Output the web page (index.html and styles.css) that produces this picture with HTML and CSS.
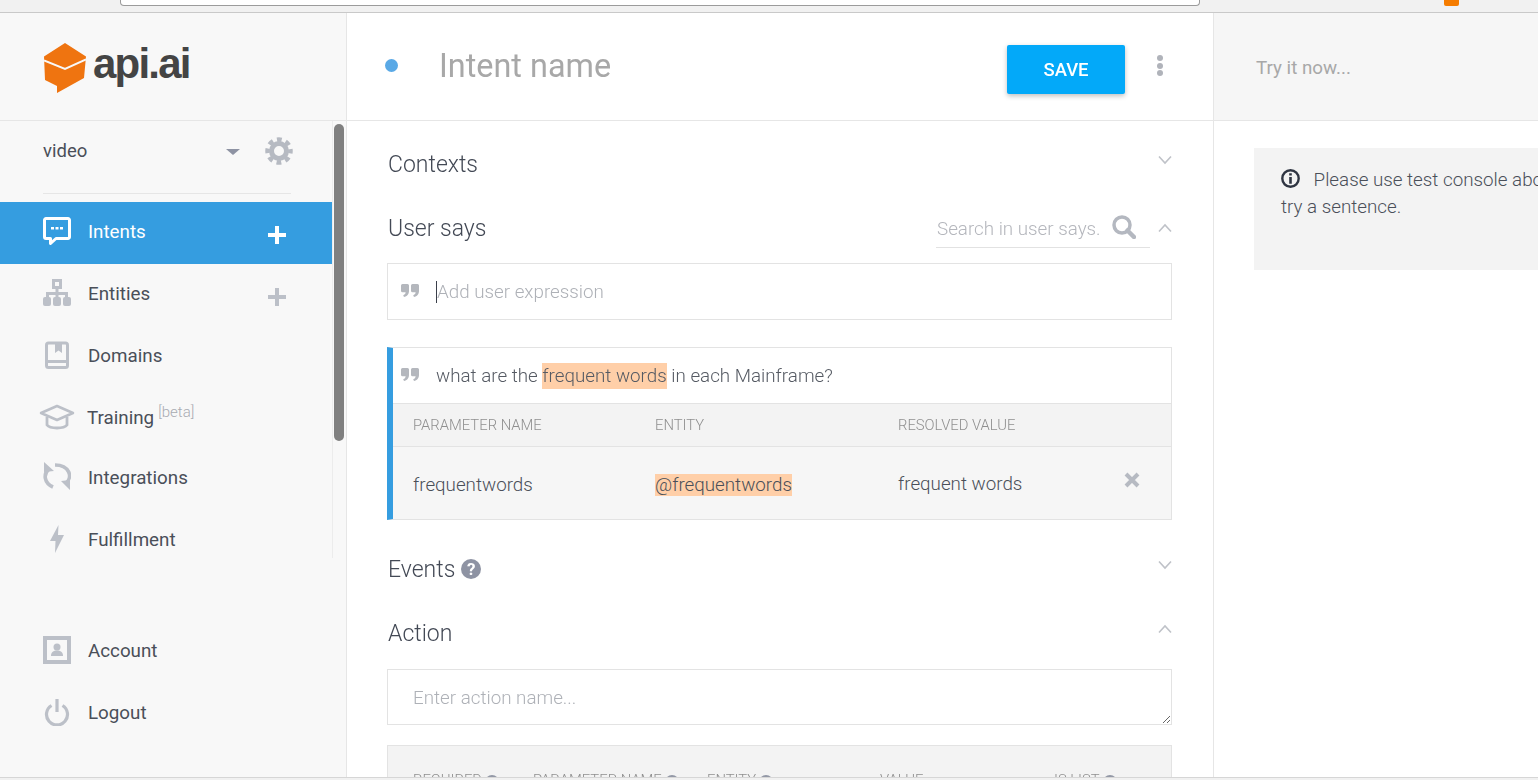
FILE: index.html
```html
<!DOCTYPE html>
<html lang="en">
<head>
    <meta charset="UTF-8">
    <title>api.ai - Intent</title>
    <link rel="stylesheet" href="styles.css">
</head>
<body>
    <svg class="defs" width="0" height="0">
        <symbol id="quote" viewBox="0 0 18 13">
            <path d="M1.500 0h5A1.500 1.500 0 0 1 8 1.500V7c0 3-2 5.500-5 6l-.8-1.800c1.500-.5 2.300-1.500 2.400-3H1.500A1.500 1.500 0 0 1 0 6.700V1.500A1.500 1.500 0 0 1 1.500 0z"/>
            <path d="M11.500 0h5A1.500 1.500 0 0 1 18 1.500V7c0 3-2 5.500-5 6l-.8-1.800c1.500-.5 2.300-1.500 2.400-3h-3.100A1.500 1.500 0 0 1 10 6.700V1.500A1.500 1.500 0 0 1 11.500 0z"/>
        </symbol>
        <symbol id="chev-down" viewBox="0 0 14 10">
            <path d="M1 1.500l6 6.500 6-6.500" fill="none" stroke="currentColor" stroke-width="1.600"/>
        </symbol>
        <symbol id="chev-up" viewBox="0 0 14 10">
            <path d="M1 8.500l6-6.500 6 6.500" fill="none" stroke="currentColor" stroke-width="1.600"/>
        </symbol>
        <symbol id="plus" viewBox="0 0 20 20">
            <path d="M10 1v18M1 10h18" fill="none" stroke="currentColor" stroke-width="4"/>
        </symbol>
    </svg>

    <div class="browser-bar">
        <div class="address-box"></div>
        <div class="ext-badge"></div>
    </div>

    <div class="app">
        <aside class="sidebar">
            <div class="logo-row">
                <svg class="logo-cube" width="42" height="50" viewBox="0 0 42 50">
                    <path d="M21 0L42 13.500 40 35 13 50V43L1 37 0 13.500z" fill="#ef7410"/>
                    <path d="M0 17.500L21 26 42 16.500" fill="none" stroke="#f8f8f8" stroke-width="2"/>
                </svg>
                <span class="logo-text">api.ai</span>
            </div>
            <div class="nav-scroll">
                <div class="agent-row">
                    <span class="agent-name">video</span>
                    <span class="agent-caret"></span>
                    <svg class="gear" width="28" height="28" viewBox="0 0 28 28">
                        <circle cx="14" cy="14" r="7.500" fill="none" stroke="#b6bac2" stroke-width="5"/>
                        <circle cx="14" cy="14" r="11.500" fill="none" stroke="#b6bac2" stroke-width="4.500" stroke-dasharray="4.800 4.230" stroke-dashoffset="2.400"/>
                    </svg>
                </div>
                <div class="nav-item active">
                    <span class="nav-icon">
                        <svg width="28" height="28" viewBox="0 0 28 28">
                            <path d="M3 1.500h22a1.500 1.500 0 0 1 1.500 1.500v17a1.500 1.500 0 0 1-1.500 1.500H13l-5.500 5v-5H3A1.500 1.500 0 0 1 1.500 20V3A1.500 1.500 0 0 1 3 1.500z" fill="none" stroke="#fff" stroke-width="3" stroke-linejoin="round"/>
                            <path d="M8 10h3v2.500H8zM12.500 10h3v2.500h-3zM17 10h3v2.500h-3z" fill="#fff"/>
                        </svg>
                    </span>
                    <span class="nav-label">Intents</span>
                    <svg class="nav-plus" width="20" height="20"><use href="#plus"/></svg>
                </div>
                <div class="nav-item">
                    <span class="nav-icon">
                        <svg width="28" height="28" viewBox="0 0 28 28">
                            <path d="M9 0h10v10H9zM12 3v4h4V3z" fill-rule="evenodd" fill="#bcc0c8"/>
                            <path d="M12.500 9h3v4H25v6h-3v-3h-6.500v3h-3v-3H6v3H3v-6h9.500z" fill="#bcc0c8"/>
                            <rect x="0" y="18" width="8" height="9" rx="2" fill="#bcc0c8"/>
                            <rect x="10" y="18" width="8" height="9" rx="2" fill="#bcc0c8"/>
                            <rect x="20" y="18" width="8" height="9" rx="2" fill="#bcc0c8"/>
                        </svg>
                    </span>
                    <span class="nav-label">Entities</span>
                    <svg class="nav-plus" width="20" height="20"><use href="#plus"/></svg>
                </div>
                <div class="nav-item">
                    <span class="nav-icon">
                        <svg width="28" height="28" viewBox="0 0 28 28">
                            <rect x="3.500" y="2" width="21" height="24.500" rx="2" fill="none" stroke="#bcc0c8" stroke-width="3"/>
                            <path d="M3.500 20.500h21" stroke="#bcc0c8" stroke-width="3"/>
                            <path d="M12 2h7v10l-3.500-2.500L12 12z" fill="#bcc0c8"/>
                        </svg>
                    </span>
                    <span class="nav-label">Domains</span>
                </div>
                <div class="nav-item training">
                    <span class="nav-icon">
                        <svg width="36" height="27" viewBox="0 0 36 27">
                            <path d="M18 2L34 9 18 16 2 9z" fill="none" stroke="#bcc0c8" stroke-width="2.500" stroke-linejoin="round"/>
                            <path d="M8 13v8c3 4 17 4 20 0v-8" fill="none" stroke="#bcc0c8" stroke-width="2.800"/>
                        </svg>
                    </span>
                    <span class="nav-label">Training<sup class="beta">[beta]</sup></span>
                </div>
                <div class="nav-item integrations">
                    <span class="nav-icon">
                        <svg width="28" height="28" viewBox="0 0 28 28">
                            <path d="M1 0l10 9-10 1zM27 28l-9-9 9-1z" fill="#bcc0c8"/>
                            <path d="M6 7C0 12 1 21 10 25M12 3c14 0 19 12 10 19" fill="none" stroke="#bcc0c8" stroke-width="3.600"/>
                        </svg>
                    </span>
                    <span class="nav-label">Integrations</span>
                </div>
                <div class="nav-item fulfillment">
                    <span class="nav-icon">
                        <svg width="14" height="28" viewBox="0 0 14 28">
                            <path d="M8.500 0L0 16h5.500L5 28 14 10H8z" fill="#bcc0c8"/>
                        </svg>
                    </span>
                    <span class="nav-label">Fulfillment</span>
                </div>
            </div>
            <div class="nav-bottom">
                <div class="nav-item">
                    <span class="nav-icon">
                        <svg width="28" height="28" viewBox="0 0 28 28">
                            <rect x="2" y="2" width="24" height="24" fill="none" stroke="#bcc0c8" stroke-width="4"/>
                            <circle cx="14" cy="11" r="3.500" fill="#bcc0c8"/>
                            <path d="M8 20c0-4 2.500-5.500 6-5.500s6 1.500 6 5.500z" fill="#bcc0c8"/>
                        </svg>
                    </span>
                    <span class="nav-label">Account</span>
                </div>
                <div class="nav-item">
                    <span class="nav-icon">
                        <svg width="28" height="28" viewBox="0 0 28 28">
                            <path d="M8.500 7.500a10.500 10.500 0 1 0 11 0" fill="none" stroke="#bcc0c8" stroke-width="3.200"/>
                            <path d="M14 1v13" stroke="#bcc0c8" stroke-width="3.200"/>
                        </svg>
                    </span>
                    <span class="nav-label">Logout</span>
                </div>
            </div>
            <div class="scroll-thumb"></div>
        </aside>

        <main class="main">
            <header class="main-head">
                <span class="status-dot"></span>
                <span class="intent-name">Intent name</span>
                <button class="save-btn">SAVE</button>
                <span class="more-dots"><i></i><i></i><i></i></span>
            </header>
            <div class="main-body">
                <div class="section-head">
                    <span class="section-title">Contexts</span>
                    <svg class="chev" width="14" height="10"><use href="#chev-down"/></svg>
                </div>

                <div class="section-head">
                    <span class="section-title">User says</span>
                    <div class="search-box">
                        <span class="search-text">Search in user says.</span>
                        <svg width="24" height="24" viewBox="0 0 24 24">
                            <circle cx="10" cy="10" r="8" fill="none" stroke="#b4b8c0" stroke-width="3.500"/>
                            <path d="M15.500 15.500L22 22" stroke="#b4b8c0" stroke-width="4.500" stroke-linecap="round"/>
                        </svg>
                    </div>
                    <svg class="chev" width="14" height="10"><use href="#chev-up"/></svg>
                </div>
                <div class="expr-box">
                    <svg class="quote-icon" width="18" height="13"><use href="#quote"/></svg>
                    <span class="caret"></span>
                    <span class="expr-placeholder">Add user expression</span>
                </div>

                <div class="expr-card">
                    <div class="expr-row">
                        <svg class="quote-icon" width="18" height="13"><use href="#quote"/></svg>
                        <span class="expr-text">what are the <span class="hl">frequent words</span> in each Mainframe?</span>
                    </div>
                    <div class="param-head">
                        <span class="col-name">PARAMETER NAME</span>
                        <span class="col-entity">ENTITY</span>
                        <span class="col-value">RESOLVED VALUE</span>
                    </div>
                    <div class="param-row">
                        <span class="col-name">frequentwords</span>
                        <span class="col-entity"><span class="hl">@frequentwords</span></span>
                        <span class="col-value">frequent words</span>
                        <svg class="remove" width="16" height="16" viewBox="0 0 16 16">
                            <path d="M2 2l12 12M14 2L2 14" stroke="#b6bac2" stroke-width="4"/>
                        </svg>
                    </div>
                </div>

                <div class="section-head events">
                    <span class="section-title">Events</span>
                    <span class="help help-big">?</span>
                    <svg class="chev" width="14" height="10"><use href="#chev-down"/></svg>
                </div>
                <div class="section-head">
                    <span class="section-title">Action</span>
                    <svg class="chev" width="14" height="10"><use href="#chev-up"/></svg>
                </div>
                <textarea class="action-input" placeholder="Enter action name..."></textarea>
                <div class="action-table">
                    <span class="th th-req">REQUIRED<span class="help">?</span></span>
                    <span class="th th-par">PARAMETER NAME<span class="help">?</span></span>
                    <span class="th th-ent">ENTITY<span class="help">?</span></span>
                    <span class="th th-val">VALUE</span>
                    <span class="th th-list">IS LIST<span class="help">?</span></span>
                </div>
            </div>
        </main>

        <section class="console">
            <div class="console-head">Try it now...</div>
            <div class="console-note">
                <svg class="info-icon" width="19" height="19" viewBox="0 0 19 19">
                    <circle cx="9.500" cy="9.500" r="8.200" fill="none" stroke="#2f3542" stroke-width="2.400"/>
                    <path d="M8.200 4.200h2.600v2.400H8.200zM8.200 8h2.600v6.800H8.200z" fill="#2f3542"/>
                </svg>
                <span class="note-first">Please use test console above to</span><br>try a sentence.
            </div>
        </section>
    </div>

    <div class="status-strip"></div>
</body>
</html>
```

FILE: styles.css
```css
* {
    box-sizing: border-box;
}

html, body {
    height: 100%;
}

body {
    margin: 0;
    height: 780px;
    display: flex;
    flex-direction: column;
    overflow: hidden;
    font-family: Roboto, "Liberation Sans", sans-serif;
    color: #4a4f59;
    background: #fff;
}

.defs {
    position: absolute;
}

/* browser chrome leftovers */
.browser-bar {
    height: 13px;
    flex: none;
    display: flex;
    align-items: flex-start;
    background: #f1f1f1;
    border-bottom: 1px solid #c9c9c9;
}

.address-box {
    width: 1080px;
    height: 6px;
    margin-left: 120px;
    background: #fff;
    border: 1px solid #9b9b9b;
    border-top: none;
    border-radius: 0 0 4px 4px;
}

.ext-badge {
    width: 15px;
    height: 6px;
    margin-left: 244px;
    background: #f57c00;
    border-radius: 0 0 2px 2px;
}

.status-strip {
    height: 3px;
    flex: none;
    background: #f1f1f1;
    border-top: 1px solid #d6d6d6;
}

.app {
    flex: 1;
    min-height: 0;
    display: flex;
}

/* sidebar */
.sidebar {
    position: relative;
    width: 347px;
    flex: none;
    background: #f8f8f8;
    border-right: 1px solid #e6e6e6;
}

.logo-row {
    height: 108px;
    display: flex;
    align-items: center;
    padding-left: 44px;
    border-bottom: 1px solid #e6e6e6;
}

.logo-cube {
    margin-top: 3px;
}

.logo-text {
    margin-left: 7px;
    margin-top: -5px;
    font-family: "Liberation Sans", sans-serif;
    font-weight: 700;
    font-size: 42px;
    letter-spacing: -1.800px;
    color: #444;
}

.nav-scroll {
    width: 333px;
    height: 437px;
    overflow: hidden;
    border-right: 1px solid #ececec;
}

.agent-row {
    display: flex;
    align-items: center;
    height: 73px;
    margin: 0 41px 8px 43px;
    padding-bottom: 13px;
    border-bottom: 1px solid #e6e6e6;
}

.agent-name {
    font-size: 18.500px;
    flex: 1;
}

.agent-caret {
    width: 0;
    height: 0;
    margin: 3px 25px 0 0;
    border-left: 7px solid transparent;
    border-right: 7px solid transparent;
    border-top: 6px solid #8e93a3;
}

.gear {
    margin-right: -2px;
}

.nav-item {
    height: 62px;
    display: flex;
    align-items: center;
    font-size: 18.800px;
    color: #4a4f59;
}

.nav-item.active {
    background: #359de0;
    color: #fff;
}

.nav-icon {
    width: 88px;
    padding-right: 17px;
    flex: none;
    display: flex;
    justify-content: flex-end;
    margin-top: -4px;
}

.nav-label {
    flex: 1;
    margin-top: -3px;
}

.beta {
    margin-left: 4px;
    font-size: 15px;
    color: #a8abb2;
    font-weight: 300;
    vertical-align: 7px;
    line-height: 0;
}

.training {
    height: 60px;
}

.training .nav-icon {
    padding-right: 13px;
    margin-top: -2px;
}

.training .nav-label {
    margin-left: -1px;
    margin-top: -1px;
}

.integrations .nav-icon {
    margin-top: -6px;
}

.fulfillment .nav-icon {
    padding-right: 24px;
}

.nav-plus {
    margin: 4px 45px 0 0;
    color: #bcc0c8;
}

.active .nav-plus {
    color: #fff;
}

.nav-bottom {
    margin-top: 63px;
}

.scroll-thumb {
    position: absolute;
    left: 334px;
    top: 111px;
    width: 10px;
    height: 317px;
    background: #808080;
    border-radius: 5px;
}

/* middle column */
.main {
    width: 867px;
    flex: none;
    overflow: hidden;
    border-right: 1px solid #e6e6e6;
}

.main-head {
    height: 108px;
    display: flex;
    align-items: center;
    border-bottom: 1px solid #e6e6e6;
}

.status-dot {
    width: 13px;
    height: 13px;
    margin: -2px 41px 0 38px;
    border-radius: 50%;
    background: #5aa9e6;
}

.intent-name {
    flex: 1;
    font-size: 32.400px;
    color: #a8a8a8;
    margin-top: -2px;
}

.save-btn {
    width: 118px;
    height: 49px;
    margin-top: 6px;
    border: none;
    border-radius: 2px;
    background: #03a9f9;
    color: #fff;
    font-family: Roboto, sans-serif;
    font-weight: 500;
    font-size: 18.500px;
    box-shadow: 0 2px 5px rgba(0, 0, 0, 0.25);
}

.more-dots {
    display: flex;
    flex-direction: column;
    gap: 1.500px;
    margin: -2px 50px 0 32px;
}

.more-dots i {
    width: 6px;
    height: 6px;
    border-radius: 50%;
    background: #b0b3ba;
}

.main-body {
    padding: 19px 41px 0 40px;
}

.section-head {
    height: 48px;
    margin-bottom: 16px;
    display: flex;
    align-items: center;
}

.section-title {
    flex: 1;
    font-size: 23px;
    font-weight: 300;
    color: #434955;
    padding: 1px 0 0 1px;
}

.chev {
    color: #bfc2c8;
    margin-bottom: 8px;
}

.search-box {
    width: 214px;
    height: 36px;
    margin: 3px 8px 0 0;
    display: flex;
    align-items: center;
    justify-content: space-between;
    padding: 0 14px 0 1px;
    border-bottom: 1px solid #e2e2e2;
}

.search-text {
    font-size: 18.800px;
    font-weight: 300;
    color: #b4b6bc;
}

.search-box svg {
    margin-top: -4px;
}

.section-head:has(.search-box) {
    margin-bottom: 11px;
}

.section-head:has(.search-box) .chev {
    margin-bottom: 0;
}

.expr-box {
    height: 57px;
    display: flex;
    align-items: center;
    padding-left: 13px;
    border: 1px solid #e3e3e3;
    background: #fff;
}

.quote-icon {
    fill: #b4b7bd;
    flex: none;
    margin-top: -2px;
}

.caret {
    width: 1px;
    height: 22px;
    margin-left: 17px;
    background: #3a3f4a;
}

.expr-placeholder {
    font-size: 18.800px;
    font-weight: 300;
    color: #aeb1b7;
}

.expr-card {
    margin-top: 27px;
    margin-bottom: 25px;
    border: 1px solid #e3e3e3;
    border-left: 6px solid #359de0;
}

.expr-row {
    height: 55px;
    display: flex;
    align-items: center;
    padding-left: 8px;
    background: #fff;
}

.expr-text {
    margin-left: 17px;
    font-size: 18.800px;
    font-weight: 300;
    color: #555a63;
}

.hl {
    background: #ffcfa8;
    padding: 2px 0;
}

.param-head,
.param-row {
    display: flex;
    align-items: center;
    padding-left: 20px;
    border-top: 1px solid #e3e3e3;
}

.param-head {
    height: 43px;
    background: #f3f3f3;
    font-size: 14.800px;
    font-weight: 300;
    color: #8f8f8f;
}

.param-row {
    position: relative;
    height: 73px;
    padding-top: 4px;
    background: #f6f6f6;
    font-size: 18.800px;
    font-weight: 300;
    color: #4a4f59;
}

.param-row .hl {
    padding: 0;
}

.param-row .col-value {
    margin-top: -3px;
}

.col-name {
    width: 242px;
    flex: none;
}

.col-entity {
    width: 243px;
    flex: none;
}

.remove {
    position: absolute;
    left: 731px;
    top: 25px;
}

.events .section-title {
    flex: none;
}

.events .chev {
    margin-left: auto;
}

.help {
    display: inline-flex;
    align-items: center;
    justify-content: center;
    width: 14px;
    height: 14px;
    margin-left: 3px;
    border-radius: 50%;
    background: #9398a6;
    color: #fff;
    font-size: 11px;
    font-weight: 700;
}

.help-big {
    width: 20px;
    height: 20px;
    margin-left: 6px;
    font-size: 17px;
    background: #8e93a3;
}

.section-head:has(+ .action-input) {
    margin-bottom: 12px;
}

.action-input {
    display: block;
    width: 785px;
    height: 56px;
    padding: 17px 25px;
    border: 1px solid #e3e3e3;
    outline: none;
    font-family: Roboto, sans-serif;
    font-size: 18.800px;
    font-weight: 300;
}

.action-input::placeholder {
    color: #aeb1b7;
    opacity: 1;
}

.action-table {
    display: flex;
    height: 90px;
    margin-top: 20px;
    padding: 25px 0 0 25px;
    border: 1px solid #e3e3e3;
    background: #f3f3f3;
    font-size: 14.800px;
    font-weight: 300;
    color: #8f8f8f;
}

.th {
    display: block;
    flex: none;
}

.th-req { width: 120px; }
.th-par { width: 174px; }
.th-ent { width: 173px; }
.th-val { width: 174px; }

/* test console */
.console {
    flex: 1;
    min-width: 0;
    overflow: hidden;
    background: #fff;
}

.console-head {
    height: 108px;
    padding: 44px 0 0 42px;
    background: #f6f6f6;
    border-bottom: 1px solid #e6e6e6;
    font-size: 18.800px;
    color: #a8a8a8;
}

.console-note {
    width: 400px;
    height: 122px;
    margin: 27px 0 0 40px;
    padding: 19px 27px;
    background: #f3f3f3;
    font-size: 18.800px;
    font-weight: 300;
    line-height: 27px;
    white-space: nowrap;
    color: #4a4f59;
}

.info-icon {
    vertical-align: -2px;
    margin-right: 9px;
}
```
